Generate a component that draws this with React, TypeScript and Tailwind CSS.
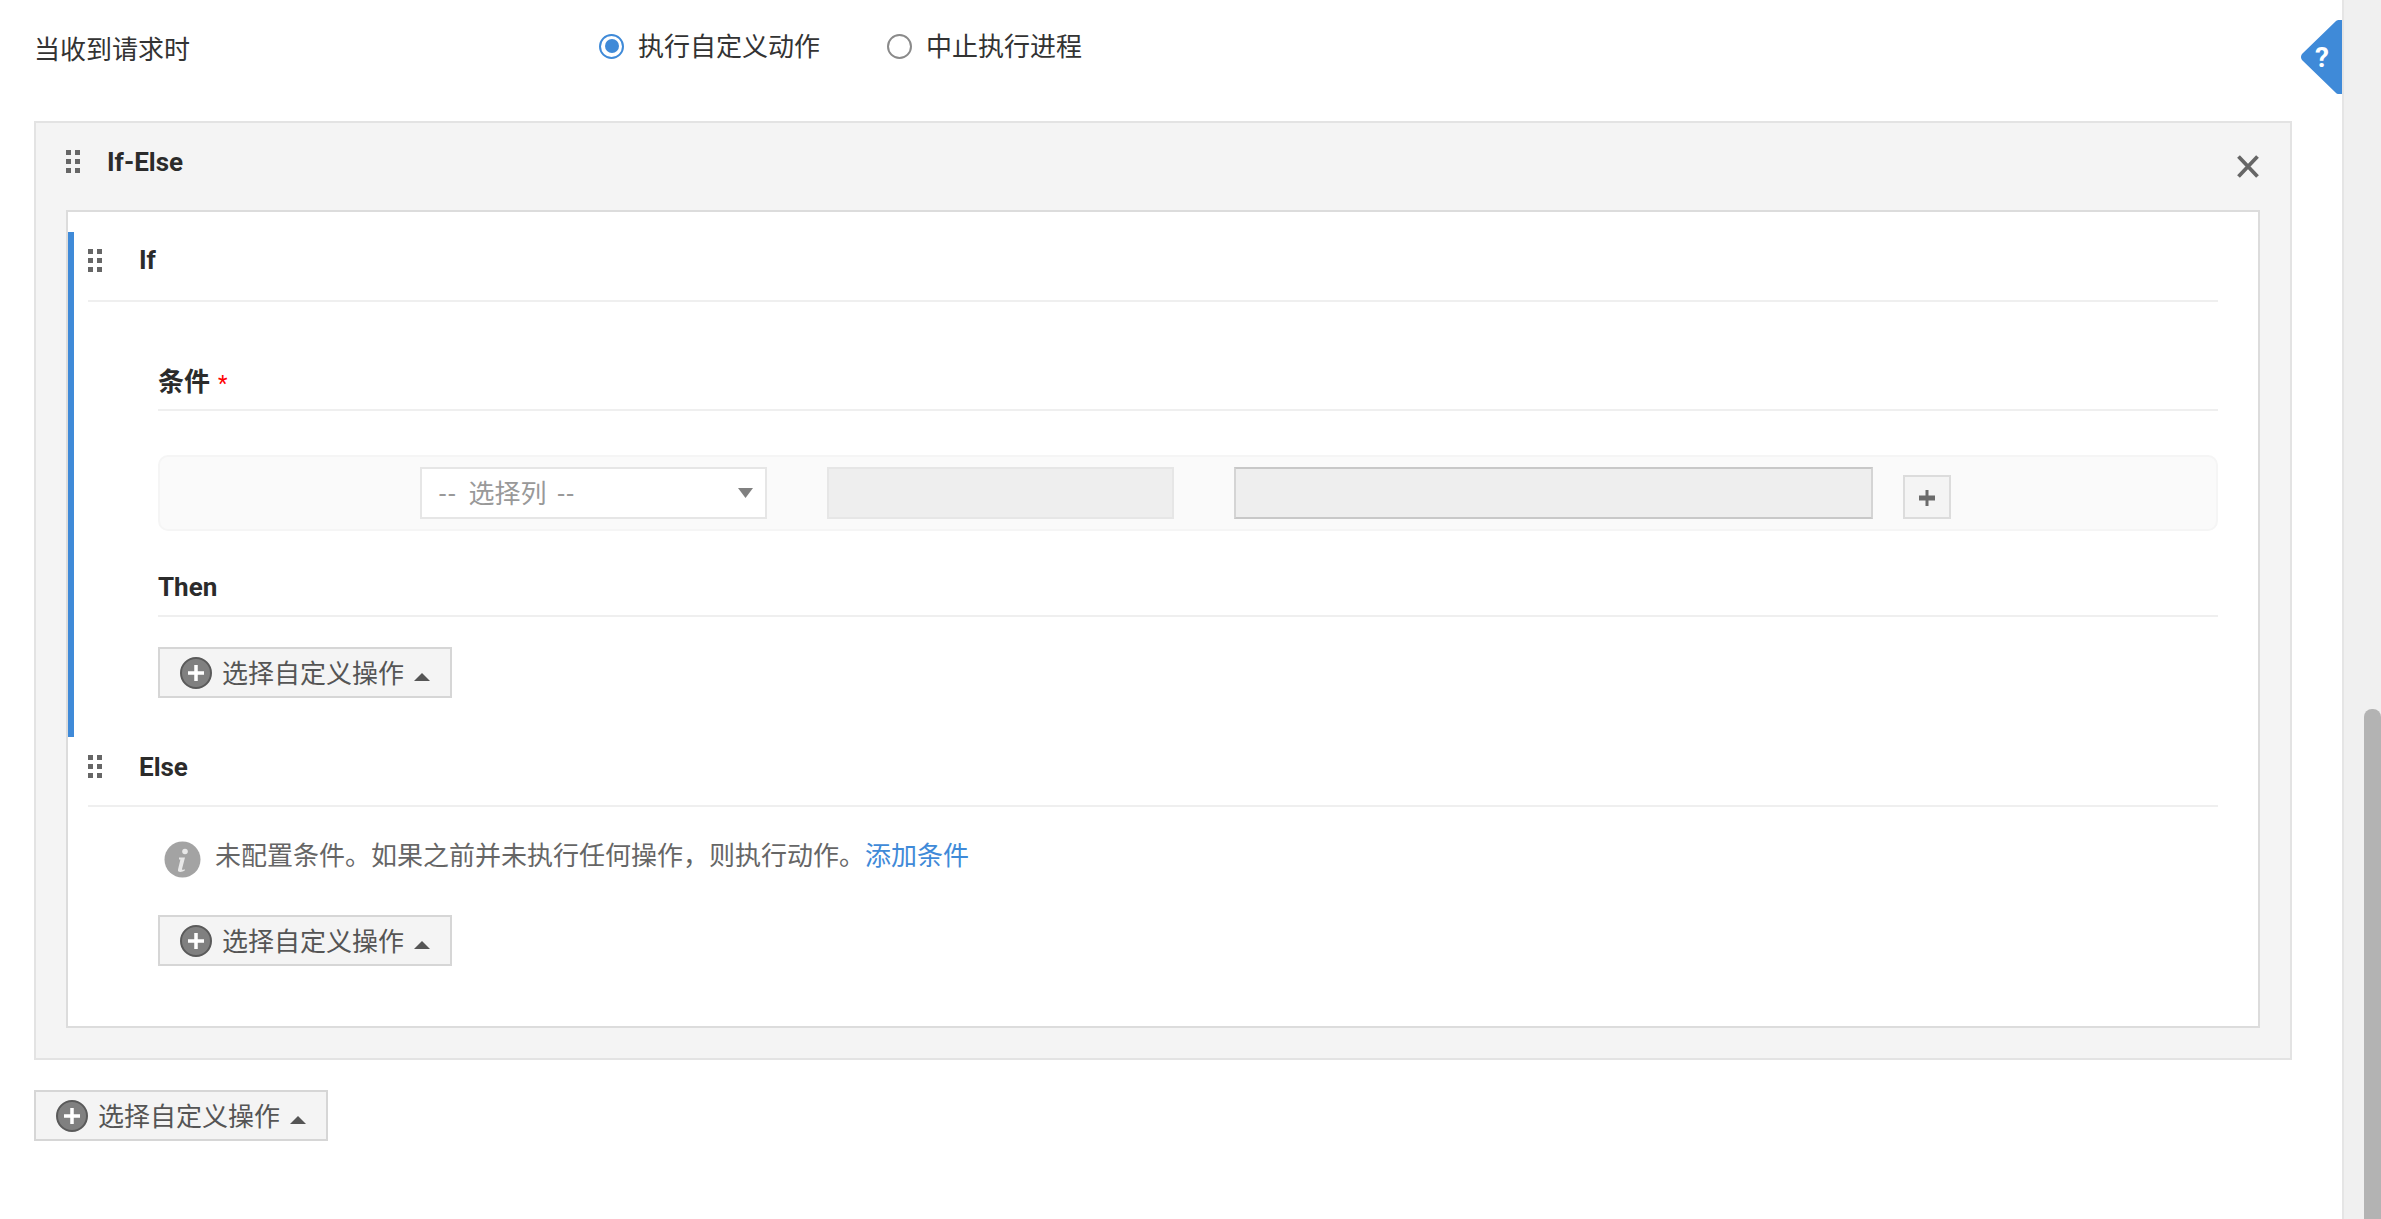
const FONT = "font-['Roboto','Noto_Sans_CJK_SC',sans-serif]";

function DragHandle() {
  return (
    <svg width="14" height="23" viewBox="0 0 14 23" className="shrink-0 text-[#666]" fill="currentColor">
      <rect x="0" y="0" width="5" height="5" />
      <rect x="9" y="0" width="5" height="5" />
      <rect x="0" y="9" width="5" height="5" />
      <rect x="9" y="9" width="5" height="5" />
      <rect x="0" y="18" width="5" height="5" />
      <rect x="9" y="18" width="5" height="5" />
    </svg>
  );
}

function ActionButton() {
  return (
    <button className="flex items-center w-[294px] h-[51px] border-2 border-[#d6d6d6] bg-[#f4f4f4] pl-5 text-[26px] leading-none text-[#555]">
      <svg width="32" height="32" viewBox="0 0 32 32" className="shrink-0">
        <circle cx="16" cy="16" r="15" fill="#808080" stroke="#5a5a5a" strokeWidth="2" />
        <path d="M16 8v16M8 16h16" stroke="#fff" strokeWidth="3.5" />
      </svg>
      <span className="ml-2.5 mt-[2px] whitespace-nowrap">选择自定义操作</span>
      <svg width="16" height="8" viewBox="0 0 16 8" className="ml-2.5 mt-2 shrink-0">
        <path d="M8 0l8 8H0z" fill="#555" />
      </svg>
    </button>
  );
}

function Radio({ checked, label }: { checked?: boolean; label: string }) {
  return (
    <label className="flex items-center gap-[14px] text-[26px] leading-none text-[#333]">
      <span className={`flex items-center justify-center w-[25px] h-[25px] rounded-full border-2 ${checked ? 'border-[#3f8ad8]' : 'border-[#8a8a8a]'}`}>
        {checked && <span className="w-[14px] h-[14px] rounded-full bg-[#3f8ad8]" />}
      </span>
      <span className="mt-[2px]">{label}</span>
    </label>
  );
}

export default function App() {
  return (
    <div className={`${FONT} relative flex h-[1219px] overflow-hidden bg-white`}>
      <main className="flex-1 pl-[34px] pr-[50px]">
        {/* request handling */}
        <div className="flex h-[121px] pt-[32px]">
          <div className="w-[565px] pt-[5px] text-[26px] leading-[26px] text-[#333]">当收到请求时</div>
          <div className="flex items-start gap-[67px]">
            <Radio checked label="执行自定义动作" />
            <Radio label="中止执行进程" />
          </div>
        </div>

        {/* if-else card */}
        <div className="border-2 border-[#e3e3e3] bg-[#f4f4f4] px-[30px] pb-[30px]">
          <div className="flex items-start justify-between h-[87px] pt-[27px]">
            <div className="flex items-start">
              <DragHandle />
              <span className="ml-[27px] mt-[-1px] text-[26px] leading-[26px] font-bold text-[#2b2b2b]">If-Else</span>
            </div>
            <svg width="22" height="23" viewBox="0 0 22 23" className="mt-[5px] mr-[1px]">
              <path d="M1.500 1.500l19 20M20.500 1.500l-19 20" stroke="#666" strokeWidth="3.800" />
            </svg>
          </div>

          <div className="border-2 border-[#dcdcdc] bg-white pt-5 pb-[60px] h-[818px]">
            {/* if */}
            <div className="border-l-[6px] border-[#3f8ad8] pl-[14px] pr-[40px] h-[505px]">
              <div className="flex items-start h-[70px] pt-[17px] border-b-2 border-[#efefef]">
                <DragHandle />
                <span className="ml-[37px] mt-[-2px] text-[26px] leading-[26px] font-bold text-[#2b2b2b]">If</span>
              </div>
              <div className="pl-[70px]">
                <div className="flex items-start h-[109px] pt-[67px] border-b-2 border-[#efefef]">
                  <span className="text-[26px] leading-[26px] font-bold text-[#2b2b2b]">条件</span>
                  <span className="ml-2 mt-[2px] text-[22px] leading-[26px] text-[#f00]">*</span>
                </div>
                <div className="flex items-start mt-[44px] h-[76px] rounded-[10px] border-2 border-[#f5f5f5] bg-[#fafafa] pl-[260px] pt-[10px]">
                  <div className="flex items-center justify-between w-[347px] h-[52px] border-2 border-[#e6e6e6] bg-white pl-[17px] pr-[12px] text-[26px] leading-none text-[#999]">
                    <span className="mt-[2px] flex gap-[11px]">
                      <span className="tracking-[2px]">--</span>
                      <span>选择列</span>
                      <span className="tracking-[2px]">--</span>
                    </span>
                    <svg width="15" height="10" viewBox="0 0 15 10"><path d="M0 0h15l-7.500 10z" fill="#808080" /></svg>
                  </div>
                  <div className="ml-[60px] w-[347px] h-[52px] border-2 border-[#e6e6e6] bg-[#eee]" />
                  <div className="ml-[60px] w-[639px] h-[52px] border-2 border-[#c8c8c8] border-x-[#d4d4d4] bg-[#eee]" />
                  <button className="flex items-center justify-center ml-[30px] mt-2 w-[48px] h-[44px] border-2 border-[#dcdcdc] bg-[#f4f4f4]">
                    <svg width="18" height="18" viewBox="0 0 18 18" className="mt-[2px]"><path d="M9 1v16" stroke="#6b6b6b" strokeWidth="3" /><path d="M1 9h16" stroke="#6b6b6b" strokeWidth="5" /></svg>
                  </button>
                </div>
                <div className="flex items-start h-[86px] pt-[43px] border-b-2 border-[#efefef]">
                  <span className="text-[26px] leading-[26px] font-bold text-[#2b2b2b]">Then</span>
                </div>
                <div className="mt-[30px]">
                  <ActionButton />
                </div>
              </div>
            </div>

            {/* else */}
            <div className="pl-5 pr-[40px]">
              <div className="flex items-start h-[70px] pt-[18px] border-b-2 border-[#efefef]">
                <DragHandle />
                <span className="ml-[37px] mt-[-1px] text-[26px] leading-[26px] font-bold text-[#2b2b2b]">Else</span>
              </div>
              <div className="pl-[70px]">
                <div className="flex items-center mt-[34px] ml-[6px] h-[36px] text-[26px] leading-none text-[#666]">
                  <svg width="37" height="37" viewBox="0 0 37 37" className="shrink-0">
                    <circle cx="18.500" cy="18.500" r="18" fill="#a3a3a3" />
                    <circle cx="21" cy="10.500" r="2.800" fill="#e8e8e8" />
                    <path d="M15 16.500h6l-3 11.500c-.2 1 .7 1.200 2.600.2l.4 1c-3 2.200-7.600 2.600-7-.8l2.400-9.900H15z" fill="#e8e8e8" />
                  </svg>
                  <span className="ml-[14px] mt-[-7px] whitespace-nowrap">未配置条件。如果之前并未执行任何操作，则执行动作。<span className="text-[#3f8ad8]">添加条件</span></span>
                </div>
                <div className="mt-[38px]">
                  <ActionButton />
                </div>
              </div>
            </div>
          </div>
        </div>

        <div className="mt-[30px]">
          <ActionButton />
        </div>
      </main>

      {/* scrollbar */}
      <aside className="w-[39px] border-l-2 border-[#e5e5e5] bg-[#f0f0f0]">
        <div className="ml-[20px] mt-[709px] h-[510px] rounded-t-[8px] bg-[#b3b3b3]" />
      </aside>

      {/* help tab */}
      <div className="absolute left-[2301px] top-[20px] flex items-center justify-center w-[41px] h-[74px]">
        <svg width="41" height="74" viewBox="0 0 41 74" className="absolute inset-0">
          <path d="M41 0h-3c-1.500 0-2.500.5-3.500 1.500L1.500 33.500c-2 2-2 5 0 7l33 32c1 1 2 1.500 3.500 1.500h3z" fill="#3f8ad8" />
        </svg>
        <span className="relative ml-[1px] mt-[2px] text-[28px] leading-none font-bold text-white">?</span>
      </div>
    </div>
  );
}
